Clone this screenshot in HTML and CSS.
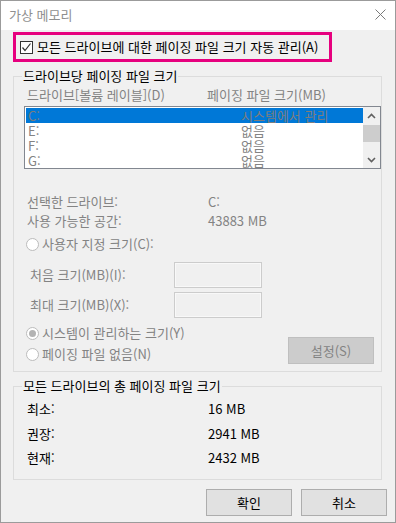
FILE: index.html
```html
<!DOCTYPE html>
<html lang="ko">
<head>
    <meta charset="UTF-8">
    <meta name="viewport" content="width=device-width, initial-scale=1.0">
    <title>가상 메모리</title>
    <link rel="stylesheet" href="styles.css">
</head>
<body>
    <div class="window">
        <div class="titlebar">
            <span class="title">가상 메모리</span>
            <svg class="close" width="11" height="11" viewBox="0 0 11 11">
                <path d="M0.5 0.5L10.5 10.5M10.5 0.5L0.5 10.5" stroke="#7a7a7a" stroke-width="1" fill="none"/>
            </svg>
        </div>

        <div class="content">
            <label class="auto-manage">
                <span class="checkbox">
                    <svg width="11" height="11" viewBox="0 0 11 11">
                        <path d="M1.5 5.5L4 8.5L9.5 1.5" stroke="#333" stroke-width="1.2" fill="none"/>
                    </svg>
                </span>
                <span>모든 드라이브에 대한 페이징 파일 크기 자동 관리(A)</span>
            </label>

            <fieldset class="group drive-group">
                <legend>드라이브당 페이징 파일 크기</legend>

                <div class="col-head">
                    <span>드라이브[볼륨 레이블](D)</span>
                    <span>페이징 파일 크기(MB)</span>
                </div>

                <div class="listbox">
                    <ul class="drive-list">
                        <li class="selected"><span>C:</span><span>시스템에서 관리</span></li>
                        <li><span>E:</span><span>없음</span></li>
                        <li><span>F:</span><span>없음</span></li>
                        <li><span>G:</span><span>없음</span></li>
                    </ul>
                    <div class="scrollbar">
                        <span class="arrow">
                            <svg width="9" height="6" viewBox="0 0 9 6"><path d="M1 5L4.5 1.5L8 5" stroke="#606060" stroke-width="1.6" fill="none"/></svg>
                        </span>
                        <span class="thumb"></span>
                        <span class="arrow down">
                            <svg width="9" height="6" viewBox="0 0 9 6"><path d="M1 1L4.5 4.5L8 1" stroke="#606060" stroke-width="1.6" fill="none"/></svg>
                        </span>
                    </div>
                </div>

                <div class="info-grid drive-info">
                    <span>선택한 드라이브:</span><span>C:</span>
                    <span>사용 가능한 공간:</span><span>43883 MB</span>
                </div>

                <label class="radio custom-size"><span class="dot"></span>사용자 지정 크기(C):</label>

                <div class="size-fields">
                    <label>처음 크기(MB)(I):</label><span class="textbox"></span>
                    <label>최대 크기(MB)(X):</label><span class="textbox"></span>
                </div>

                <div class="bottom-row">
                    <div class="radios">
                        <label class="radio"><span class="dot checked"></span>시스템이 관리하는 크기(Y)</label>
                        <label class="radio"><span class="dot"></span>페이징 파일 없음(N)</label>
                    </div>
                    <button class="btn btn-set" disabled>설정(S)</button>
                </div>
            </fieldset>

            <fieldset class="group total-group">
                <legend>모든 드라이브의 총 페이징 파일 크기</legend>
                <div class="info-grid totals">
                    <span>최소:</span><span>16 MB</span>
                    <span>권장:</span><span>2941 MB</span>
                    <span>현재:</span><span>2432 MB</span>
                </div>
            </fieldset>

            <div class="actions">
                <button class="btn">확인</button>
                <button class="btn">취소</button>
            </div>
        </div>
    </div>
</body>
</html>
```

FILE: styles.css
```css
* {
    margin: 0;
    padding: 0;
    box-sizing: border-box;
}

body {
    font-family: "Noto Sans CJK KR", "Noto Sans", sans-serif;
    font-size: 13px;
    line-height: 16px;
    color: #000;
    background: #fff;
}

.window {
    width: 396px;
    height: 523px;
    border: 1px solid #9b9b9b;
    background: #f0f0f0;
    display: flex;
    flex-direction: column;
}

.titlebar {
    height: 29px;
    background: #fff;
    display: flex;
    align-items: center;
    justify-content: space-between;
    padding: 0 9px 1px 8px;
}

.title {
    color: #8f8f8f;
}

.close {
    margin-top: -1px;
}

.content {
    padding: 2px 0 0 12px;
}

/* auto manage checkbox, highlighted */
.auto-manage {
    width: 319px;
    height: 30px;
    border: 3px solid #e6007e;
    display: flex;
    align-items: center;
    padding-left: 4px;
    gap: 4px;
}

.checkbox {
    width: 13px;
    height: 13px;
    border: 1px solid #333;
    background: #fff;
    display: flex;
    align-items: center;
    justify-content: center;
}

/* group boxes */
.group {
    width: 369px;
    border: 1px solid #dcdcdc;
    margin-top: 6px;
    padding: 0 0 7px 10px;
}

.group legend {
    margin-left: -2px;
    padding: 0 1px;
}

.col-head {
    display: grid;
    grid-template-columns: 180px 1fr;
    color: #838383;
    padding-left: 3px;
    margin-top: 3px;
}

.listbox {
    width: 357px;
    height: 63px;
    margin-top: 3px;
    border: 1px solid #828790;
    background: #fff;
    display: flex;
}

.drive-list {
    list-style: none;
    flex: 1;
    padding: 1px 0 1px 1px;
}

.drive-list li {
    height: 15px;
    line-height: 15px;
    display: grid;
    grid-template-columns: 213px 1fr;
    padding-left: 2px;
    color: #838383;
}

.drive-list li.selected {
    background: #0078d7;
    color: #7d7d7d;
}

.scrollbar {
    width: 17px;
    background: #f0f0f0;
    display: flex;
    flex-direction: column;
}

.scrollbar .arrow {
    height: 17px;
    display: flex;
    align-items: center;
    justify-content: center;
}

.scrollbar .arrow.down {
    margin-top: auto;
}

.scrollbar .thumb {
    height: 17px;
    margin: 1px 0 0 0;
    background: #cdcdcd;
}

.info-grid {
    display: grid;
    grid-template-columns: 181px 1fr;
    padding-left: 3px;
}

.drive-info {
    margin-top: 25px;
    row-gap: 3px;
    color: #838383;
}

.radio {
    display: flex;
    align-items: center;
    gap: 3px;
    color: #838383;
    margin-left: 2px;
}

.radio .dot {
    width: 13px;
    height: 13px;
    border-radius: 50%;
    border: 1px solid #bcbcbc;
    background: #fff;
    display: flex;
    align-items: center;
    justify-content: center;
}

.radio .dot.checked::after {
    content: "";
    width: 7px;
    height: 7px;
    border-radius: 50%;
    background: #b3b3b3;
}

.custom-size {
    margin-top: 7px;
}

.size-fields {
    display: grid;
    grid-template-columns: 144px 88px;
    row-gap: 4px;
    align-items: center;
    margin-top: 10px;
    padding-left: 6px;
    color: #838383;
}

.textbox {
    height: 26px;
    border: 1px solid #cccccc;
    box-shadow: inset 0 0 0 1px #f8f8f8;
    background: #f0f0f0;
}

.bottom-row {
    display: flex;
    justify-content: space-between;
    margin-top: 7px;
    padding-right: 7px;
}

.radios {
    display: flex;
    flex-direction: column;
    row-gap: 5px;
}

.btn {
    width: 86px;
    height: 27px;
    border: 1px solid #adadad;
    background: #e1e1e1;
    font-family: inherit;
    font-size: 13px;
    color: #000;
}

.btn-set {
    margin-top: 12px;
    background: #cccccc;
    border-color: #bfbfbf;
    color: #838383;
}

.total-group {
    padding-bottom: 13px;
}

.totals {
    margin-top: 7px;
    row-gap: 8.5px;
}

.actions {
    display: flex;
    justify-content: flex-end;
    gap: 9px;
    margin-top: 9px;
    padding-right: 8px;
}
```
